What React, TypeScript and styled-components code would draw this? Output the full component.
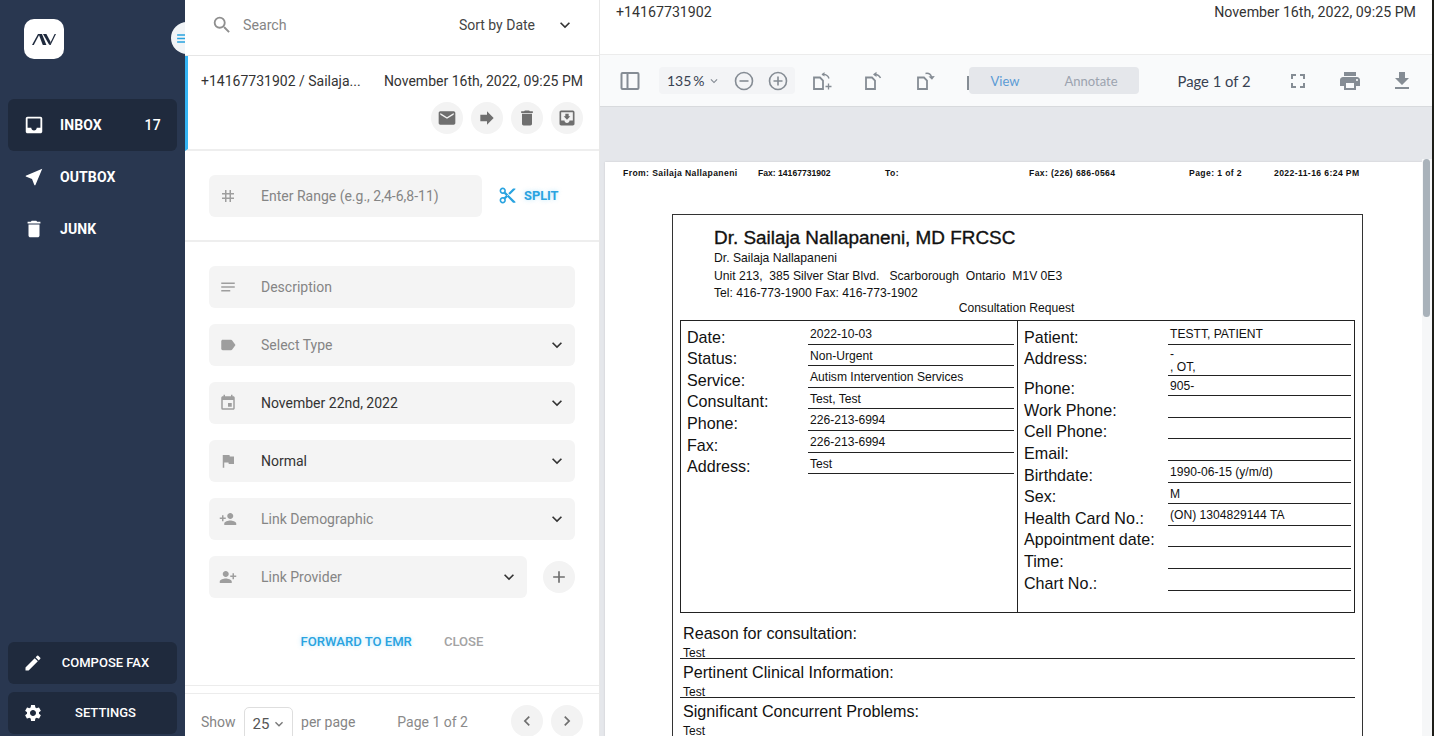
import React from "react";
import styled, { createGlobalStyle } from "styled-components";
import {
  MdInbox, MdNearMe, MdDelete, MdCreate, MdSettings, MdSearch, MdExpandMore, MdEmail, MdForward,
  MdMoveToInbox, MdContentCut, MdTag, MdNotes, MdLabel, MdEvent, MdFlag, MdPersonAdd, MdAdd,
  MdChevronLeft, MdChevronRight, MdMenu, MdFullscreen, MdPrint, MdGetApp, MdKeyboardArrowDown,
} from "react-icons/md";

const Global = createGlobalStyle`
  html, body { margin: 0; padding: 0; overflow: hidden; background: #fff; }
  body { font-family: Roboto, "Liberation Sans", sans-serif; }
  * { box-sizing: border-box; }
`;

const Shell = styled.div`
  display: flex; width: 1434px; height: 736px; overflow: hidden; background: #fff;
`;

/* Sidebar */
const Sidebar = styled.aside`
  position: relative; width: 185px; flex: none; height: 100%; background: #293750;
  display: flex; flex-direction: column; padding: 19px 8px 2px;
`;
const LogoTile = styled.div`
  width: 40px; height: 40px; margin-left: 16px; margin-bottom: 40px; background: #fff; border-radius: 10px;
  display: flex; align-items: center; justify-content: center;
`;
const Toggle = styled.div`
  position: absolute; left: 171px; top: 22px; width: 32px; height: 32px; border-radius: 50%;
  background: #f1f4f7; color: #29a3e0; display: flex; align-items: center; padding-left: 4px; font-size: 17px;
`;
const NavItem = styled.div<{ $active?: boolean }>`
  height: 52px; display: flex; align-items: center; padding: 0 16px 0 15px; color: #fff; border-radius: 6px;
  background: ${(p) => (p.$active ? "#1f2a3d" : "transparent")};
  font-size: 14px; font-weight: 700; letter-spacing: 0.1px;
  svg { font-size: 22px; margin-right: 15px; flex: none; }
`;
const Badge = styled.span`
  margin-left: auto; font-weight: 500; font-size: 14px; letter-spacing: 0.3px;
`;
const Spacer = styled.div`flex: 1;`;
const BottomAction = styled.div`
  position: relative; height: 42px; margin-top: 8px; background: #1f2a3d; border-radius: 6px; color: #fff;
  display: flex; align-items: center; justify-content: center;
  font-size: 13px; font-weight: 500; padding: 0 0 2px 26px;
  svg { position: absolute; left: 15px; top: 11px; font-size: 20px; }
`;

/* Middle column */
const Middle = styled.section`
  position: relative; z-index: 2; width: 415px; flex: none; height: 100%; background: #fff;
  border-right: 1px solid #e8e8e8; display: flex; flex-direction: column;
`;
const SearchBar = styled.div`
  height: 56px; flex: none; border-bottom: 1px solid #e6e6e6; display: flex; align-items: center;
  padding: 0 24px 5px 26px; font-size: 14.2px;
`;
const SearchIcon = styled(MdSearch)`font-size: 22px; color: #8f8f8f; margin-right: 10px;`;
const SearchText = styled.span`color: #858585; flex: 1;`;
const SortText = styled.span`color: #444; margin-right: 20px; font-size: 14px;`;
const Chevron = styled(MdExpandMore)`font-size: 20px; color: #333; flex: none;`;

const Message = styled.div`
  height: 95px; flex: none; border-left: 3px solid #35b4f4; border-bottom: 2px solid #eeeeee;
  padding: 16px 16px 0 13px; display: flex; flex-direction: column;
`;
const MessageTop = styled.div`
  display: flex; justify-content: space-between; color: #333; font-size: 14px; line-height: 18px;
`;
const MessageActions = styled.div`
  display: flex; gap: 8px; justify-content: flex-end; margin-top: 12px;
`;
const RoundButton = styled.div<{ $size?: number }>`
  width: 32px; height: 32px; flex: none; border-radius: 50%; background: #f3f3f3; color: #6f6f6f;
  display: flex; align-items: center; justify-content: center;
  svg { font-size: ${(p) => p.$size ?? 20}px; }
`;
const SplitRow = styled.div`
  height: 91px; flex: none; border-bottom: 2px solid #eeeeee; padding: 24px 0 0 24px; display: flex; gap: 16px;
`;
const Field = styled.div<{ $w?: number }>`
  width: ${(p) => p.$w ?? 366}px; height: 42px; flex: none; background: #f4f4f4; border-radius: 6px;
  display: flex; align-items: center; padding: 0 8px 0 12px; font-size: 14px; color: #858585;
`;
const FieldIcon = styled.span`
  width: 14px; display: flex; justify-content: center; margin-right: 26px; flex: none; color: #9e9e9e;
  svg { font-size: 18px; flex: none; }
`;
const FlipIcon = styled(FieldIcon)`
  svg { transform: scaleX(-1); }
`;
const FieldText = styled.span<{ $filled?: boolean }>`
  flex: 1; color: ${(p) => (p.$filled ? "#333" : "#858585")};
`;
const SplitButton = styled.div`
  display: flex; align-items: center; color: #29a3e0; font-size: 12.8px; font-weight: 700; gap: 7px;
  height: 40px; text-shadow: 0 0 4px rgba(53,180,244,.35);
  svg { font-size: 19px; margin-top: 1px; }
`;
const Form = styled.div`
  flex: 1; display: flex; flex-direction: column; gap: 16px; padding: 24px 24px 0;
`;
const FieldRow = styled.div`display: flex; align-items: center; gap: 16px;`;
const FormActions = styled.div`
  display: flex; justify-content: center; gap: 32px; margin-top: 20px;
  font-size: 13.1px; font-weight: 500; line-height: 16px;
`;
const ForwardLink = styled.span`color: #29a3e0; text-shadow: 0 0 4px rgba(53,180,244,.35);`;
const CloseLink = styled.span`color: #a3a3a3;`;
const Footer = styled.div`
  flex: none; height: 51px; border-top: 1px solid #ececec; padding-top: 7px;
`;
const Pager = styled.div`
  height: 44px; border-top: 1px solid #ececec; display: flex; align-items: flex-start; padding: 11px 16px 0;
  color: #858585; font-size: 14px; white-space: nowrap;
`;
const PagerText = styled.span`line-height: 34px;`;
const PerPage = styled.div`
  width: 50px; height: 34px; margin: 2px 8px 0; border: 1px solid #dedede; border-radius: 5px; color: #555;
  display: flex; align-items: center; padding-left: 8px; font-size: 15px;
  svg { font-size: 16px; margin-left: 2px; color: #777; }
`;
const PageLabel = styled.span`line-height: 34px; margin-left: 42px; margin-right: 43px; color: #8a8a8a;`;
const PagerButtons = styled.div`display: flex; gap: 8px;`;

/* Right column */
const Viewer = styled.section`
  flex: 1; height: 100%; display: flex; flex-direction: column; position: relative; background: #fff;
  &::after { content: ""; position: absolute; top: 0; right: 0; bottom: 0; width: 2px; background: #1d1d18; }
`;
const ViewerHead = styled.div`
  height: 55px; flex: none; display: flex; justify-content: space-between; padding: 3px 18px 0 16px;
  font-size: 14.2px; line-height: 19px; color: #333; border-bottom: 1px solid #ececec;
`;
const Toolbar = styled.div`
  height: 52px; flex: none; background: #f9fafb; border-bottom: 1px solid #d8dadd; display: flex; align-items: center;
  padding-left: 20px; padding-right: 20px; font-family: Lato, sans-serif; color: #858c94;
`;
const ToolGroup = styled.div`
  width: 136px; height: 27px; margin-left: 19px; background: #f3f4f6; border-radius: 4px; display: flex; align-items: center;
  padding-left: 8px; color: #374151; font-size: 14px; flex: none;
`;
const ZoomCaret = styled(MdKeyboardArrowDown)`font-size: 14px; color: #858c94; margin-left: 3px; margin-right: 13px;`;
const ZoomIcons = styled.div`display: flex; gap: 14px;`;
const RotateIcons = styled.div`display: flex; gap: 31px; margin-left: 17px; flex: none;`;
const Separator = styled.div`width: 1.5px; height: 14px; margin-left: 30px; background: #858c94; flex: none; margin-top: 4px;`;
const Tabs = styled.div`
  width: 170px; height: 27px; background: #e5e7eb; border-radius: 4px; display: flex; align-items: center; font-size: 13px; flex: none;
`;
const TabView = styled.span`color: #5b9bd5; margin-left: 22px;`;
const TabAnnotate = styled.span`color: #9ca3af; margin-left: 45px;`;
const PageCount = styled.span`font-size: 14.8px; color: #374151; margin-left: 39px; flex: none;`;
const ToolRight = styled.div`
  margin-left: auto; display: flex; gap: 28px; svg { font-size: 24px; flex: none; }
`;
const Canvas = styled.div`
  flex: 1; position: relative; overflow: hidden; background: #e5e7eb; padding: 55px 12px 0 5px;
`;
const Thumb = styled.div`
  position: absolute; right: 4px; top: 52px; width: 7px; height: 158px; background: #a9b2ba; border-radius: 4px;
`;
const Track = styled.div`
  position: absolute; right: 2px; top: 52px; bottom: 0; width: 10px; background: #f6f7f8;
`;
const Page = styled.div`
  width: 817px; height: 640px; background: #fff; box-shadow: 0 0 2px rgba(0,0,0,.12); font-family: "Liberation Sans", Arial, sans-serif; color: #111;
  padding-top: 6px;
`;
const FaxLine = styled.div`
  display: grid; grid-template-columns: 135px 127px 144px 160px 85px auto; padding-left: 18px;
  font-size: 8.6px; font-weight: 700; letter-spacing: .4px; line-height: 11px;
`;
const FaxNumber = styled.span`letter-spacing: 0;`;
const DocBox = styled.div`
  margin: 35px 0 0 67px; width: 691px; height: 600px; border: 1px solid #333; padding: 0 7px;
`;
const LetterHead = styled.div`
  padding: 10px 0 0 34px; font-size: 12.15px; line-height: 17.5px;
`;
const DocTitle = styled.div`
  font-size: 18.9px; line-height: 26px; -webkit-text-stroke: .35px #111; margin-bottom: -1px;
`;
const DocSubtitle = styled.div`
  text-align: center; font-size: 12.1px; line-height: 14px; margin: -2px 0 5px; padding-right: 2px;
`;
const DocTable = styled.div`
  width: 675px; height: 293px; border: 1px solid #222; display: grid; grid-template-columns: 336px 1fr;
`;
const DocCol = styled.div<{ $right?: boolean }>`
  padding: 2.5px 3px 0 6px;
  ${(p) => (p.$right ? "border-left: 1px solid #222;" : "")}
`;
const DocRow = styled.div<{ $right?: boolean; $h?: number }>`
  display: grid; grid-template-columns: ${(p) => (p.$right ? "144px 183px" : "121px 206px")};
  height: ${(p) => p.$h ?? 21.6}px; align-items: end;
`;
const DocLabel = styled.span<{ $top?: boolean }>`
  font-size: 16.1px; line-height: 18px; align-self: ${(p) => (p.$top ? "start" : "end")};
  padding-top: ${(p) => (p.$top ? 4 : 0)}px; margin-bottom: ${(p) => (p.$top ? 0 : -1)}px;
`;
const DocValue = styled.span`
  display: block; height: 100%; border-bottom: 1.5px solid #222; padding: 4px 0 0 2px; font-size: 12.1px; line-height: 14px;
  white-space: pre-line; overflow: visible;
`;
const AddressValue = styled(DocValue)`padding-top: 3px; line-height: 13.5px;`;
const SectionWrap = styled.div`margin-top: 7px;`;
const Section = styled.div`
  height: 39px; border-bottom: 1.5px solid #222; width: 675px; padding-left: 3px;
`;
const SectionHead = styled.div`font-size: 16.15px; line-height: 18px; padding-top: 4px;`;
const SectionText = styled.div`font-size: 12px; line-height: 14px; margin-top: 4px;`;

const Logo = () => (
  <svg width="24" height="11" viewBox="0 0 24 11" fill="#1f2a3d">
    <polygon points="0,11 6,0 7.6,0 1.8,11" />
    <polygon points="6.6,0 10,0 14.4,11 10.8,11" />
    <polygon points="11,0 14.4,0 18.8,8.2 17.3,11" />
    <polygon points="17.3,11 22.6,0 24,0 18.6,11" />
  </svg>
);
const stroke = { fill: "none", stroke: "#858c94", strokeWidth: 2 } as const;
const PanelIcon = () => (
  <svg width="20" height="20" viewBox="0 0 20 20" {...stroke}><rect x="1.5" y="2" width="17" height="16" rx="1" /><path d="M7.5 2v16" /></svg>
);
const ZoomOut = () => (
  <svg width="20" height="20" viewBox="0 0 20 20" {...stroke}><circle cx="10" cy="10" r="8.5" strokeWidth="1.6" /><path d="M5.5 10h9" strokeWidth="1.6" /></svg>
);
const ZoomIn = () => (
  <svg width="20" height="20" viewBox="0 0 20 20" {...stroke}><circle cx="10" cy="10" r="8.5" strokeWidth="1.6" /><path d="M5.5 10h9M10 5.5v9" strokeWidth="1.6" /></svg>
);
const PageShape = () => <path d="M2 6.5h6l3 3V18H2z" {...stroke} strokeWidth="1.8" />;
const RotateAdd = () => (
  <svg width="21" height="20" viewBox="0 0 21 20">
    <PageShape />
    <path d="M10 3.5c3.5-.5 6 1 7 4" {...stroke} strokeWidth="1.4" />
    <path d="M12.5 1l-3 2.5 3 2z" fill="#858c94" />
    <path d="M13.5 15.5h6M16.5 12.5v6" {...stroke} strokeWidth="1.3" />
  </svg>
);
const RotateLeft = () => (
  <svg width="21" height="20" viewBox="0 0 21 20">
    <PageShape />
    <path d="M10 3.5c3-.5 5 .5 6.5 3.5" {...stroke} strokeWidth="1.5" />
    <path d="M12.5 .8l-3.5 2.7 3.5 2.4z" fill="#858c94" />
  </svg>
);
const RotateRight = () => (
  <svg width="21" height="20" viewBox="0 0 21 20">
    <PageShape />
    <path d="M9.5 2.5c2.5-.5 5 .5 6 3.5" {...stroke} strokeWidth="1.5" />
    <path d="M12.5 5.5l3.5 3.2 2.8-3.6z" fill="#858c94" />
  </svg>
);

const leftRows = [
  ["Date:", "2022-10-03"], ["Status:", "Non-Urgent"], ["Service:", "Autism Intervention Services"],
  ["Consultant:", "Test, Test"], ["Phone:", "226-213-6994"], ["Fax:", "226-213-6994"], ["Address:", "Test"],
];
const rightRows = [
  ["Phone:", "905-"], ["Work Phone:", ""], ["Cell Phone:", ""], ["Email:", ""], ["Birthdate:", "1990-06-15 (y/m/d)"],
  ["Sex:", "M"], ["Health Card No.:", "(ON) 1304829144 TA"], ["Appointment date:", ""], ["Time:", ""], ["Chart No.:", ""],
];
const sections = ["Reason for consultation:", "Pertinent Clinical Information:", "Significant Concurrent Problems:"];

export default function App() {
  return (
    <Shell>
      <Global />
      <Sidebar>
        <Toggle><MdMenu /></Toggle>
        <LogoTile><Logo /></LogoTile>
        <NavItem $active><MdInbox />INBOX<Badge>17</Badge></NavItem>
        <NavItem><MdNearMe />OUTBOX</NavItem>
        <NavItem><MdDelete />JUNK</NavItem>
        <Spacer />
        <BottomAction><MdCreate />COMPOSE FAX</BottomAction>
        <BottomAction><MdSettings />SETTINGS</BottomAction>
      </Sidebar>

      <Middle>
        <SearchBar>
          <SearchIcon />
          <SearchText>Search</SearchText>
          <SortText>Sort by Date</SortText>
          <Chevron />
        </SearchBar>
        <Message>
          <MessageTop>
            <span>+14167731902 / Sailaja...</span>
            <span>November 16th, 2022, 09:25 PM</span>
          </MessageTop>
          <MessageActions>
            <RoundButton><MdEmail /></RoundButton>
            <RoundButton><MdForward /></RoundButton>
            <RoundButton><MdDelete /></RoundButton>
            <RoundButton><MdMoveToInbox /></RoundButton>
          </MessageActions>
        </Message>
        <SplitRow>
          <Field $w={273}><FieldIcon><MdTag /></FieldIcon><FieldText>Enter Range (e.g., 2,4-6,8-11)</FieldText></Field>
          <SplitButton><MdContentCut />SPLIT</SplitButton>
        </SplitRow>
        <Form>
          <Field><FieldIcon><MdNotes /></FieldIcon><FieldText>Description</FieldText></Field>
          <Field><FieldIcon><MdLabel /></FieldIcon><FieldText>Select Type</FieldText><Chevron /></Field>
          <Field><FieldIcon><MdEvent /></FieldIcon><FieldText $filled>November 22nd, 2022</FieldText><Chevron /></Field>
          <Field><FieldIcon><MdFlag /></FieldIcon><FieldText $filled>Normal</FieldText><Chevron /></Field>
          <Field><FieldIcon><MdPersonAdd /></FieldIcon><FieldText>Link Demographic</FieldText><Chevron /></Field>
          <FieldRow>
            <Field $w={318}><FlipIcon><MdPersonAdd /></FlipIcon><FieldText>Link Provider</FieldText><Chevron /></Field>
            <RoundButton $size={20}><MdAdd /></RoundButton>
          </FieldRow>
          <FormActions>
            <ForwardLink>FORWARD TO EMR</ForwardLink>
            <CloseLink>CLOSE</CloseLink>
          </FormActions>
        </Form>
        <Footer>
          <Pager>
            <PagerText>Show</PagerText>
            <PerPage>25<MdKeyboardArrowDown /></PerPage>
            <PagerText>per page</PagerText>
            <PageLabel>Page 1 of 2</PageLabel>
            <PagerButtons>
              <RoundButton><MdChevronLeft /></RoundButton>
              <RoundButton><MdChevronRight /></RoundButton>
            </PagerButtons>
          </Pager>
        </Footer>
      </Middle>

      <Viewer>
        <ViewerHead>
          <span>+14167731902</span>
          <span>November 16th, 2022, 09:25 PM</span>
        </ViewerHead>
        <Toolbar>
          <PanelIcon />
          <ToolGroup>
            135{"\u2009"}%<ZoomCaret />
            <ZoomIcons><ZoomOut /><ZoomIn /></ZoomIcons>
          </ToolGroup>
          <RotateIcons><RotateAdd /><RotateLeft /><RotateRight /></RotateIcons>
          <Separator />
          <Tabs>
            <TabView>View</TabView>
            <TabAnnotate>Annotate</TabAnnotate>
          </Tabs>
          <PageCount>Page 1 of 2</PageCount>
          <ToolRight><MdFullscreen /><MdPrint /><MdGetApp /></ToolRight>
        </Toolbar>
        <Canvas>
          <Track />
          <Thumb />
          <Page>
            <FaxLine>
              <span>From: Sailaja Nallapaneni</span>
              <FaxNumber>Fax: 14167731902</FaxNumber>
              <span>To:</span>
              <span>Fax: (226) 686-0564</span>
              <span>Page: 1 of 2</span>
              <span>2022-11-16 6:24 PM</span>
            </FaxLine>
            <DocBox>
              <LetterHead>
                <DocTitle>Dr. Sailaja Nallapaneni, MD FRCSC</DocTitle>
                <div>Dr. Sailaja Nallapaneni</div>
                <div>Unit 213,&nbsp; 385 Silver Star Blvd.&nbsp; &nbsp;Scarborough&nbsp; Ontario&nbsp; M1V 0E3</div>
                <div>Tel: 416-773-1900 Fax: 416-773-1902</div>
              </LetterHead>
              <DocSubtitle>Consultation Request</DocSubtitle>
              <DocTable>
                <DocCol>
                  {leftRows.map(([l, v]) => (
                    <DocRow key={l}><DocLabel>{l}</DocLabel><DocValue>{v}</DocValue></DocRow>
                  ))}
                </DocCol>
                <DocCol $right>
                  <DocRow $right><DocLabel>Patient:</DocLabel><DocValue>TESTT, PATIENT</DocValue></DocRow>
                  <DocRow $right $h={30}><DocLabel $top>Address:</DocLabel><AddressValue>{"  -\n, OT,"}</AddressValue></DocRow>
                  {rightRows.map(([l, v]) => (
                    <DocRow $right key={l}><DocLabel>{l}</DocLabel><DocValue>{v}</DocValue></DocRow>
                  ))}
                </DocCol>
              </DocTable>
              <SectionWrap>
                {sections.map((s) => (
                  <Section key={s}>
                    <SectionHead>{s}</SectionHead>
                    <SectionText>Test</SectionText>
                  </Section>
                ))}
              </SectionWrap>
            </DocBox>
          </Page>
        </Canvas>
      </Viewer>
    </Shell>
  );
}
